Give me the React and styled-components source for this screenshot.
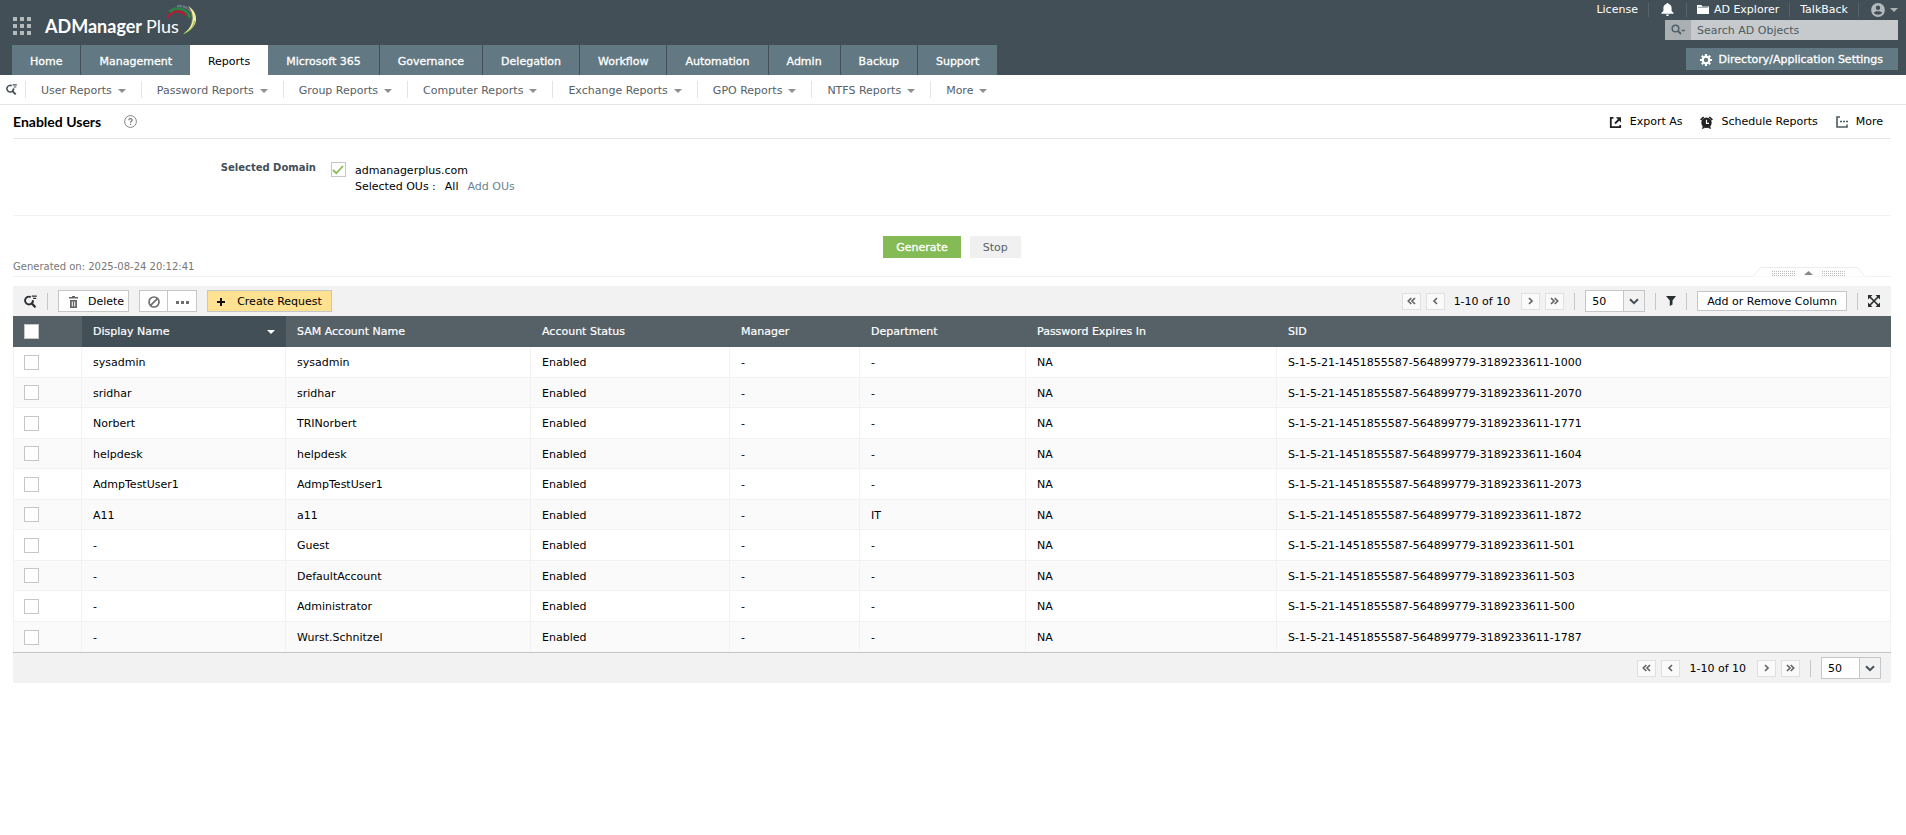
import React from "react";
import styled, { createGlobalStyle, css } from "styled-components";

const c = {
  slate: "#434f57",
  teal: "#627882",
  head: "#566167",
  line: "#e4e4e4",
  faint: "#f2f2f2",
  edge: "#c3c7ca",
  link: "#6b8490",
};

const Global = createGlobalStyle`
  *, *::before, *::after { box-sizing: border-box; }
  body {
    margin: 0;
    background: #fff;
    color: #000;
    font-family: Verdana, "DejaVu Sans", sans-serif;
    font-size: 11px;
    line-height: 16px;
  }
  button, input, select { font: inherit; color: inherit; margin: 0; }
  button { cursor: pointer; white-space: nowrap; }
  a { color: inherit; text-decoration: none; white-space: nowrap; }
  svg { display: block; flex: none; }
`;

/* ---------- header ---------- */

const Header = styled.header`
  display: flex;
  justify-content: space-between;
  height: 75px;
  background: ${c.slate};
  color: #fff;
`;

const HeaderLeft = styled.div`
  display: flex;
  flex-direction: column;
  justify-content: space-between;
  padding-left: 12px;
`;

const Brand = styled.div`
  display: flex;
  align-items: flex-start;
  gap: 14px;
  padding-top: 16px;
`;

const AppsButton = styled.button`
  display: flex;
  padding: 1px 0 0 1px;
  border: 0;
  background: none;
`;

const Logo = styled.a`
  position: relative;
  font: 700 18px/20px Lato, sans-serif;
  span { font-weight: 400; }
  svg { position: absolute; top: -12px; right: -20px; }
`;

const Tabs = styled.nav`
  display: flex;
`;

const Tab = styled.a`
  height: 30px;
  padding: 0 18px;
  line-height: 34px;
  border-right: ${(p) => (p.$flush ? 0 : 1)}px solid ${c.slate};
  background: ${(p) => (p.$active ? "#fff" : c.teal)};
  color: ${(p) => (p.$active ? "#000" : "#fff")};
  -webkit-text-stroke: ${(p) => (p.$active ? 0 : "0.3px")} currentColor;
`;

const HeaderRight = styled.div`
  display: flex;
  flex-direction: column;
  align-items: flex-end;
  padding-right: 8px;
`;

const Utilities = styled.div`
  display: flex;
  align-items: center;
  height: 20px;
  padding-bottom: 1px;
`;

const Utility = styled.a`
  display: flex;
  align-items: center;
  gap: 5px;
  height: 14px;
  padding: 0 10px;
  border-left: ${(p) => (p.$first ? 0 : 1)}px solid #576269;
  color: ${(p) => (p.$dim ? "#aeb3b6" : "#fff")};
  ${(p) => p.$wide && css`padding: 0 12px;`}
  ${(p) => p.$dim && css`padding: 0 0 0 12px;`}
`;

const SearchBox = styled.div`
  display: flex;
  width: 233px;
  height: 20px;
  background: #c6cacd;
  color: #4d5a61;
`;

const SearchScope = styled.button`
  display: flex;
  align-items: center;
  justify-content: center;
  width: 26px;
  padding: 0;
  border: 0;
  background: #aaafb2;
`;

const SearchInput = styled.input`
  flex: 1;
  min-width: 0;
  padding: 2px 6px 0;
  border: 0;
  background: none;
  &::placeholder { color: #4d5a61; opacity: 1; }
`;

const SettingsButton = styled.button`
  display: flex;
  align-items: center;
  gap: 7px;
  height: 22px;
  margin-top: 8px;
  padding: 1px 15px 0 14px;
  border: 0;
  background: ${c.teal};
  color: #fff;
  -webkit-text-stroke: 0.3px currentColor;
`;

/* ---------- sub navigation ---------- */

const SubNav = styled.nav`
  display: flex;
  align-items: center;
  height: 30px;
  border-bottom: 1px solid ${c.line};
  color: #566167;
`;

const SubSearch = styled.button`
  display: flex;
  padding: 0 8px 0 6px;
  border: 0;
  background: none;
  color: ${c.slate};
`;

const SubItem = styled.a`
  display: flex;
  align-items: center;
  gap: 6px;
  height: 17px;
  padding: 2px 15px 0;
  border-left: 1px solid ${c.line};
`;

/* ---------- page ---------- */

const Page = styled.main`
  padding: 0 15px 0 13px;
`;

const TitleRow = styled.div`
  display: flex;
  align-items: center;
  justify-content: space-between;
  height: 34px;
  border-bottom: 1px solid ${c.line};
`;

const Title = styled.h1`
  display: flex;
  align-items: center;
  gap: 23px;
  margin: 0;
  font: 700 14px/20px Lato, sans-serif;
`;

const TitleActions = styled.div`
  display: flex;
  gap: 18px;
  padding: 1px 8px 0 0;
`;

const TextButton = styled.button`
  display: flex;
  align-items: center;
  gap: 8px;
  padding: 0;
  border: 0;
  background: none;
`;

const DomainForm = styled.section`
  display: grid;
  grid-template-columns: 303px auto;
  justify-content: start;
  gap: 14px;
  height: 77px;
  padding-top: 23px;
  border-bottom: 1px solid ${c.faint};
`;

const FieldName = styled.div`
  color: ${c.slate};
  font-size: 10px;
  font-weight: 700;
  line-height: 12px;
  text-align: right;
`;

const DomainChoice = styled.div`
  display: grid;
  grid-template-columns: 16px auto;
  column-gap: 9px;
  align-items: start;
  align-content: start;
  line-height: 17px;
`;

const OuLine = styled.div`
  display: flex;
  grid-column: 2;
  gap: 9px;
  line-height: 15px;
  a { color: ${c.link}; }
`;

const CheckCell = styled.span`
  display: inline-grid;
  vertical-align: middle;
  > * { grid-area: 1 / 1; place-self: center; }
  > svg { pointer-events: none; }
`;

const CheckInput = styled.input`
  appearance: none;
  width: 15px;
  height: 15px;
  border: 1px solid ${c.edge};
  background: #fff;
`;

const FormActions = styled.div`
  display: flex;
  justify-content: center;
  gap: 9px;
  padding-top: 20px;
`;

const FormButton = styled.button`
  height: 22px;
  padding: 2px 13px 0;
  border: 0;
  background: ${(p) => (p.$primary ? "#84bb54" : "#f0f0f0")};
  color: ${(p) => (p.$primary ? "#fff" : "#566167")};
  -webkit-text-stroke: ${(p) => (p.$primary ? "0.3px" : 0)} currentColor;
`;

const ReportMeta = styled.div`
  display: flex;
  align-items: flex-end;
  justify-content: space-between;
  height: 19px;
  border-bottom: 1px solid ${c.faint};
  color: #777;
  font-size: 10px;
  p { margin: 0; line-height: 18px; }
`;

const Collapse = styled.button`
  display: flex;
  margin: 0 26px -1px 0;
  padding: 0;
  border: 0;
  background: none;
`;

const Bar = styled.div`
  display: flex;
  align-items: center;
  justify-content: space-between;
  height: 30px;
  background: ${c.faint};
  ${(p) => p.$top && css`margin-top: 9px;`}
`;

const BarSide = styled.div`
  display: flex;
  align-items: center;
  gap: 10px;
  padding: 0 ${(p) => (p.$footer ? 10 : 11)}px;
  ${(p) => p.$footer && css`margin-left: auto;`}
`;

const Divider = styled.span`
  width: 1px;
  height: 17px;
  background: ${c.edge};
`;

const PlainIcon = styled.button`
  display: flex;
  padding: 0;
  border: 0;
  background: none;
  color: #2b2f32;
`;

const BarButton = styled.button`
  display: flex;
  align-items: center;
  gap: ${(p) => (p.$accent ? 12 : 10)}px;
  height: ${(p) => (p.$short ? 20 : 22)}px;
  padding: ${(p) => (p.$icon ? "2px 7px 0 8px" : p.$delete ? "2px 4px 0 10px" : "1px 9px 0")};
  border: 1px solid ${c.edge};
  background: ${(p) => (p.$accent ? "#ffe192" : "#fff")};
  & + & { border-left: 0; }
`;

const ButtonGroup = styled.div`
  display: flex;
`;

const PagerBox = styled.div`
  display: flex;
  align-items: center;
  gap: 5px;
`;

const PagerButton = styled.button`
  display: flex;
  align-items: center;
  justify-content: center;
  width: 19px;
  height: 17px;
  padding: 0;
  border: 1px solid #e0e0e0;
  background: #fafafa;
  color: #666;
`;

const PagerText = styled.span`
  padding: 2px 6px 0 4px;
`;

const SelectBox = styled.span`
  display: grid;
  grid-template-columns: 38px 22px;
  height: 22px;
`;

const SelectInput = styled.select`
  grid-area: 1 / 1 / 2 / 3;
  appearance: none;
  width: 100%;
  padding: 2px 6px 0;
  border: 1px solid ${c.edge};
  border-radius: 0;
  background: #fff;
`;

const SelectArrow = styled.span`
  grid-area: 1 / 2;
  display: grid;
  place-items: center;
  border: 1px solid ${c.edge};
  background: ${c.faint};
  color: ${c.slate};
  pointer-events: none;
`;

/* ---------- table ---------- */

const Table = styled.table`
  width: 100%;
  table-layout: fixed;
  border-collapse: separate;
  border-spacing: 0;
  border-bottom: 1px solid ${c.edge};
`;

const HeadCell = styled.th`
  height: 31px;
  padding: 0 11px;
  background: ${(p) => (p.$sorted ? c.slate : c.head)};
  color: #fff;
  font-weight: 400;
  text-align: left;
  -webkit-text-stroke: 0.2px currentColor;
`;

const SortLabel = styled.span`
  display: flex;
  align-items: center;
  justify-content: space-between;
`;

const Row = styled.tr`
  height: 31px;
  &:nth-child(even) { height: 30px; background: #fafafa; }
`;

const Cell = styled.td`
  padding: 2px 10px 0 11px;
  border-bottom: 1px solid ${c.faint};
  border-right: 1px solid ${c.faint};
  white-space: nowrap;
  &:first-child { padding: 0 10px; border-left: 1px solid ${c.faint}; }
  ${Row}:last-child & { border-bottom: 0; }
`;

/* ---------- icons ---------- */

const Caret = ({ up, color = "#8e8e8e", size = 8 }) => (
  <svg width={size} height={size / 2} viewBox="0 0 8 4" fill={color} aria-hidden="true">
    <path d={up ? "M0 4L4 0L8 4Z" : "M0 0H8L4 4Z"} />
  </svg>
);

const AppsIcon = () => (
  <svg width="18" height="18" viewBox="0 0 18 18" fill="#b4b9bc" aria-hidden="true">
    {[0, 7, 14].map((y) => [0, 7, 14].map((x) => <rect key={x + "-" + y} x={x} y={y} width="4" height="4" />))}
  </svg>
);

const LogoArcs = () => (
  <svg width="34" height="32" viewBox="0 0 34 32" fill="none" aria-hidden="true">
    <path d="M2.500 13.500C7 6.500 15 5.500 21 11.500" stroke="#b01f34" strokeWidth="2.400" />
    <path d="M4.500 8C11 1.500 22 4 25 14" stroke="#2f8146" strokeWidth="2.800" />
    <path d="M12 2C23 1 31 9 26.500 21" stroke="#667782" strokeWidth="2.200" strokeDasharray="5 .6" />
    <path d="M23 2C34 8 35 24 18 30C28.500 23 31 11 23 2Z" fill="#f5ec9a" />
    <path d="M29.500 17C28.500 23 25 27 18.500 30" stroke="#7fb24a" strokeWidth="1" />
  </svg>
);

const FindIcon = ({ size = 12 }) => (
  <svg width={size} height={size} viewBox="0 0 12 12" fill="none" stroke="currentColor" aria-hidden="true">
    <path d="M6.200 1.900A3.600 3.600 0 1 0 8.200 5.200" strokeWidth="1.700" />
    <path d="M6.800 7.400L10.600 11.400" strokeWidth="2" />
    <path d="M7.200 1H11.800M8.400 3.200H11.200" strokeWidth="1.200" />
    <path d="M8.200 4.800V6.600" strokeWidth="1.600" />
  </svg>
);

const BellIcon = () => (
  <svg width="13" height="13" viewBox="0 0 13 13" fill="#fff" aria-hidden="true">
    <path d="M6.500 0C7.200 0 7.500.4 7.500 1C9.600 1.500 10.600 3 10.600 5V8L12.600 10V10.800H.4V10L2.400 8V5C2.400 3 3.400 1.500 5.500 1C5.500 .4 5.800 0 6.500 0ZM5 11.500H8C8 12.400 7.400 13 6.500 13S5 12.400 5 11.500Z" />
  </svg>
);

const FolderIcon = () => (
  <svg width="12" height="9" viewBox="0 0 12 9" fill="#fff" aria-hidden="true">
    <path d="M0 0H4.500L5.500 1.500H12V9H0Z" />
    <path d="M1 2.300H11" stroke={c.slate} strokeWidth="0.600" />
  </svg>
);

const UserIcon = () => (
  <svg width="14" height="14" viewBox="0 0 14 14" aria-hidden="true">
    <circle cx="7" cy="7" r="6.900" fill="#b4b9bc" />
    <circle cx="7" cy="4.700" r="2.200" fill={c.slate} />
    <path d="M2.800 9.800C3.500 7.600 10.500 7.600 11.200 9.800C10 12.300 4 12.300 2.800 9.800Z" fill={c.slate} />
  </svg>
);

const ScopeIcon = () => (
  <svg width="14" height="12" viewBox="0 0 14 12" fill="none" stroke="#4f6069" aria-hidden="true">
    <circle cx="4.500" cy="4.500" r="3.300" strokeWidth="1.500" />
    <path d="M6.800 6.800L10 10" strokeWidth="1.900" />
    <path d="M10.500 6.500H14" strokeWidth="1.400" />
  </svg>
);

const GearIcon = () => (
  <svg width="12" height="12" viewBox="0 0 12 12" fill="none" stroke="#fff" aria-hidden="true">
    <circle cx="6" cy="6" r="3.300" strokeWidth="2.200" />
    <path d="M6 0V2M6 10V12M0 6H2M10 6H12M1.800 1.800L3.200 3.200M8.800 8.800L10.200 10.200M10.200 1.800L8.800 3.200M3.200 8.800L1.800 10.200" strokeWidth="2.200" />
  </svg>
);

const HelpIcon = () => (
  <svg width="13" height="13" viewBox="0 0 13 13" fill="none" stroke="#777" aria-hidden="true">
    <circle cx="6.500" cy="6.500" r="5.900" strokeWidth="0.900" />
    <path d="M4.800 5.200C4.800 3 8.200 3.100 8.200 5C8.200 6.300 6.500 6.200 6.500 7.800M6.500 8.800V9.900" strokeWidth="1.200" />
  </svg>
);

const ExportIcon = () => (
  <svg width="13" height="13" viewBox="0 0 13 13" fill="none" stroke="#222" aria-hidden="true">
    <path d="M4.500 1.800H1.800V11.200H11.200V9" strokeWidth="1.800" />
    <path d="M6 7.500L10 3.500" strokeWidth="1.800" />
    <path d="M6.800 1.200H12V6.400Z" fill="#222" stroke="none" />
  </svg>
);

const AlarmIcon = () => (
  <svg width="13" height="13" viewBox="0 0 13 13" fill="#222" aria-hidden="true">
    <circle cx="6.500" cy="6.800" r="5.200" />
    <path d="M0 3.400L3 .4L4.300 1.600L1.300 4.600ZM13 3.400L10 .4L8.700 1.600L11.700 4.600ZM1.800 13L3 10L5 12ZM11.200 13L10 10L8 12Z" />
    <path d="M6.500 3.800V7.300H9" fill="none" stroke="#fff" strokeWidth="1.200" />
  </svg>
);

const MoreIcon = () => (
  <svg width="12" height="12" viewBox="0 0 12 12" fill="none" stroke="#4d5a61" aria-hidden="true">
    <path d="M4 1H1V11H11V8.500" strokeWidth="1.600" />
    <path d="M4 5.500H6M7 5.500H9M10 5.500H12" strokeWidth="1.600" />
  </svg>
);

const TrashIcon = () => (
  <svg width="9" height="12" viewBox="0 0 9 12" fill="#666" aria-hidden="true">
    <path d="M3 0H6V1H9V2.400H0V1H3ZM1 4H8V12H1ZM2.800 5.500V10.500H3.800V5.500ZM5.200 5.500V10.500H6.200V5.500Z" fillRule="evenodd" />
  </svg>
);

const BanIcon = () => (
  <svg width="12" height="12" viewBox="0 0 12 12" fill="none" stroke="#6e6e6e" strokeWidth="1.700" aria-hidden="true">
    <circle cx="6" cy="6" r="5" />
    <path d="M9.400 2.600L2.600 9.400" />
  </svg>
);

const DotsIcon = () => (
  <svg width="13" height="3" viewBox="0 0 13 3" fill="#6e6e6e" aria-hidden="true">
    <path d="M0 0H3V3H0ZM5 0H8V3H5ZM10 0H13V3H10Z" />
  </svg>
);

const PlusIcon = () => (
  <svg width="8" height="8" viewBox="0 0 8 8" fill="#111" aria-hidden="true">
    <path d="M3 0H5V3H8V5H5V8H3V5H0V3H3Z" />
  </svg>
);

const ChevronIcon = ({ double, right }) => (
  <svg width="9" height="8" viewBox="0 0 9 8" fill="none" stroke="currentColor" strokeWidth="1.700" aria-hidden="true">
    <g transform={right ? "translate(9 0) scale(-1 1)" : undefined}>
      <path d={double ? "M4.300 1L1.300 4L4.300 7M8 1L5 4L8 7" : "M6 1L3 4L6 7"} />
    </g>
  </svg>
);

const DownIcon = () => (
  <svg width="10" height="7" viewBox="0 0 10 7" fill="none" stroke="currentColor" strokeWidth="2" aria-hidden="true">
    <path d="M1 1.200L5 5.200L9 1.200" />
  </svg>
);

const FilterIcon = () => (
  <svg width="10" height="10" viewBox="0 0 10 10" fill="currentColor" aria-hidden="true">
    <path d="M0 0H10L6.500 4.500V8.500L3.800 10V4.500Z" />
  </svg>
);

const ExpandIcon = () => (
  <svg width="12" height="12" viewBox="0 0 12 12" fill="currentColor" aria-hidden="true">
    <path d="M0 0H4.500L0 4.500ZM12 0V4.500L7.500 0ZM0 12V7.500L4.500 12ZM12 12H7.500L12 7.500Z" />
    <path d="M1.500 1.500L10.500 10.500M10.500 1.500L1.500 10.500" stroke="currentColor" strokeWidth="1.700" />
  </svg>
);

const TickIcon = () => (
  <svg width="12" height="10" viewBox="0 0 12 10" fill="none" stroke="#84bb54" strokeWidth="1.800" aria-hidden="true">
    <path d="M1 5L4.300 8.300L11 1" />
  </svg>
);

const CollapseShape = () => (
  <svg width="112" height="10" viewBox="0 0 112 10" fill="none" aria-hidden="true">
    <path d="M0 9.500L7.500 .5H104.500L112 9.500" fill="#fff" stroke="#ececec" />
    <path d="M19 4.500H42M19 6.500H42M19 8.500H42M69 4.500H92M69 6.500H92M69 8.500H92" stroke="#bbb" strokeDasharray="1 1" />
    <path d="M51 8L55.500 4L60 8Z" fill="#888" />
  </svg>
);

/* ---------- shared pieces ---------- */

const Check = ({ label, id, checked }) => {
  const [on, setOn] = React.useState(Boolean(checked));
  return (
    <CheckCell>
      <CheckInput type="checkbox" id={id} aria-label={label} checked={on} onChange={() => setOn(!on)} />
      {on && <TickIcon />}
    </CheckCell>
  );
};

const PageSize = ({ label }) => (
  <SelectBox>
    <SelectInput aria-label={label} defaultValue="50">
      <option>25</option>
      <option>50</option>
      <option>100</option>
    </SelectInput>
    <SelectArrow><DownIcon /></SelectArrow>
  </SelectBox>
);

const Pager = () => (
  <PagerBox>
    <PagerButton aria-label="First page"><ChevronIcon double /></PagerButton>
    <PagerButton aria-label="Previous page"><ChevronIcon /></PagerButton>
    <PagerText>1-10 of 10</PagerText>
    <PagerButton aria-label="Next page"><ChevronIcon right /></PagerButton>
    <PagerButton aria-label="Last page"><ChevronIcon double right /></PagerButton>
  </PagerBox>
);

const tabs = ["Home", "Management", "Reports", "Microsoft 365", "Governance", "Delegation", "Workflow", "Automation", "Admin", "Backup", "Support"];
const reports = ["User Reports", "Password Reports", "Group Reports", "Computer Reports", "Exchange Reports", "GPO Reports", "NTFS Reports", "More"];
const columns = ["SAM Account Name", "Account Status", "Manager", "Department", "Password Expires In", "SID"];
const widths = [69, 204, 245, 199, 130, 166, 251];
const users = [
  ["sysadmin", "sysadmin", "-", "1000"],
  ["sridhar", "sridhar", "-", "2070"],
  ["Norbert", "TRINorbert", "-", "1771"],
  ["helpdesk", "helpdesk", "-", "1604"],
  ["AdmpTestUser1", "AdmpTestUser1", "-", "2073"],
  ["A11", "a11", "IT", "1872"],
  ["-", "Guest", "-", "501"],
  ["-", "DefaultAccount", "-", "503"],
  ["-", "Administrator", "-", "500"],
  ["-", "Wurst.Schnitzel", "-", "1787"],
];

export default function App() {
  return (
    <>
      <Global />
      <Header>
        <HeaderLeft>
          <Brand>
            <AppsButton aria-label="Applications"><AppsIcon /></AppsButton>
            <Logo href="#">ADManager <span>Plus</span><LogoArcs /></Logo>
          </Brand>
          <Tabs>
            {tabs.map((t, i) => (
              <Tab key={t} href="#" $active={t === "Reports"} $flush={i === 1 || i === 2 || i === tabs.length - 1}>{t}</Tab>
            ))}
          </Tabs>
        </HeaderLeft>
        <HeaderRight>
          <Utilities>
            <Utility href="#" $first>License</Utility>
            <Utility href="#" $wide aria-label="Notifications"><BellIcon /></Utility>
            <Utility href="#"><FolderIcon />AD Explorer</Utility>
            <Utility href="#">TalkBack</Utility>
            <Utility href="#" $dim aria-label="Account"><UserIcon /><Caret color="#aeb3b6" /></Utility>
          </Utilities>
          <SearchBox>
            <SearchScope aria-label="Search scope"><ScopeIcon /></SearchScope>
            <SearchInput aria-label="Search AD Objects" placeholder="Search AD Objects" />
          </SearchBox>
          <SettingsButton><GearIcon />Directory/Application Settings</SettingsButton>
        </HeaderRight>
      </Header>

      <SubNav>
        <SubSearch aria-label="Search reports"><FindIcon size={11} /></SubSearch>
        {reports.map((r) => <SubItem key={r} href="#">{r}<Caret /></SubItem>)}
      </SubNav>

      <Page>
        <TitleRow>
          <Title>Enabled Users<HelpIcon /></Title>
          <TitleActions>
            <TextButton><ExportIcon />Export As</TextButton>
            <TextButton><AlarmIcon />Schedule Reports</TextButton>
            <TextButton><MoreIcon />More</TextButton>
          </TitleActions>
        </TitleRow>

        <DomainForm>
          <FieldName>Selected Domain</FieldName>
          <DomainChoice>
            <Check id="domain" checked />
            <label htmlFor="domain">admanagerplus.com</label>
            <OuLine><span>Selected OUs :</span><span>All</span><a href="#">Add OUs</a></OuLine>
          </DomainChoice>
        </DomainForm>

        <FormActions>
          <FormButton $primary>Generate</FormButton>
          <FormButton>Stop</FormButton>
        </FormActions>
        <ReportMeta>
          <p>Generated on: 2025-08-24 20:12:41</p>
          <Collapse aria-label="Collapse criteria"><CollapseShape /></Collapse>
        </ReportMeta>

        <Bar $top>
          <BarSide>
            <PlainIcon aria-label="Search"><FindIcon size={13} /></PlainIcon>
            <Divider />
            <BarButton $delete><TrashIcon />Delete</BarButton>
            <ButtonGroup>
              <BarButton $icon aria-label="Disable"><BanIcon /></BarButton>
              <BarButton $icon aria-label="More actions"><DotsIcon /></BarButton>
            </ButtonGroup>
            <BarButton $accent><PlusIcon />Create Request</BarButton>
          </BarSide>
          <BarSide>
            <Pager />
            <Divider />
            <PageSize label="Rows per page" />
            <Divider />
            <PlainIcon aria-label="Filter"><FilterIcon /></PlainIcon>
            <Divider />
            <BarButton $short>Add or Remove Column</BarButton>
            <Divider />
            <PlainIcon aria-label="Full screen"><ExpandIcon /></PlainIcon>
          </BarSide>
        </Bar>

        <Table>
          <colgroup>
            {widths.map((w, i) => <col key={i} width={w} />)}
            <col />
          </colgroup>
          <thead>
            <tr>
              <HeadCell><Check label="Select all users" /></HeadCell>
              <HeadCell $sorted><SortLabel>Display Name<Caret color="#fff" /></SortLabel></HeadCell>
              {columns.map((h) => <HeadCell key={h}>{h}</HeadCell>)}
            </tr>
          </thead>
          <tbody>
            {users.map(([name, sam, dept, rid]) => (
              <Row key={rid}>
                <Cell><Check label={"Select " + sam} /></Cell>
                <Cell>{name}</Cell>
                <Cell>{sam}</Cell>
                <Cell>Enabled</Cell>
                <Cell>-</Cell>
                <Cell>{dept}</Cell>
                <Cell>NA</Cell>
                <Cell>S-1-5-21-1451855587-564899779-3189233611-{rid}</Cell>
              </Row>
            ))}
          </tbody>
        </Table>
        <Bar>
          <BarSide $footer>
            <Pager />
            <Divider />
            <PageSize label="Rows per page, bottom" />
          </BarSide>
        </Bar>
      </Page>
    </>
  );
}
